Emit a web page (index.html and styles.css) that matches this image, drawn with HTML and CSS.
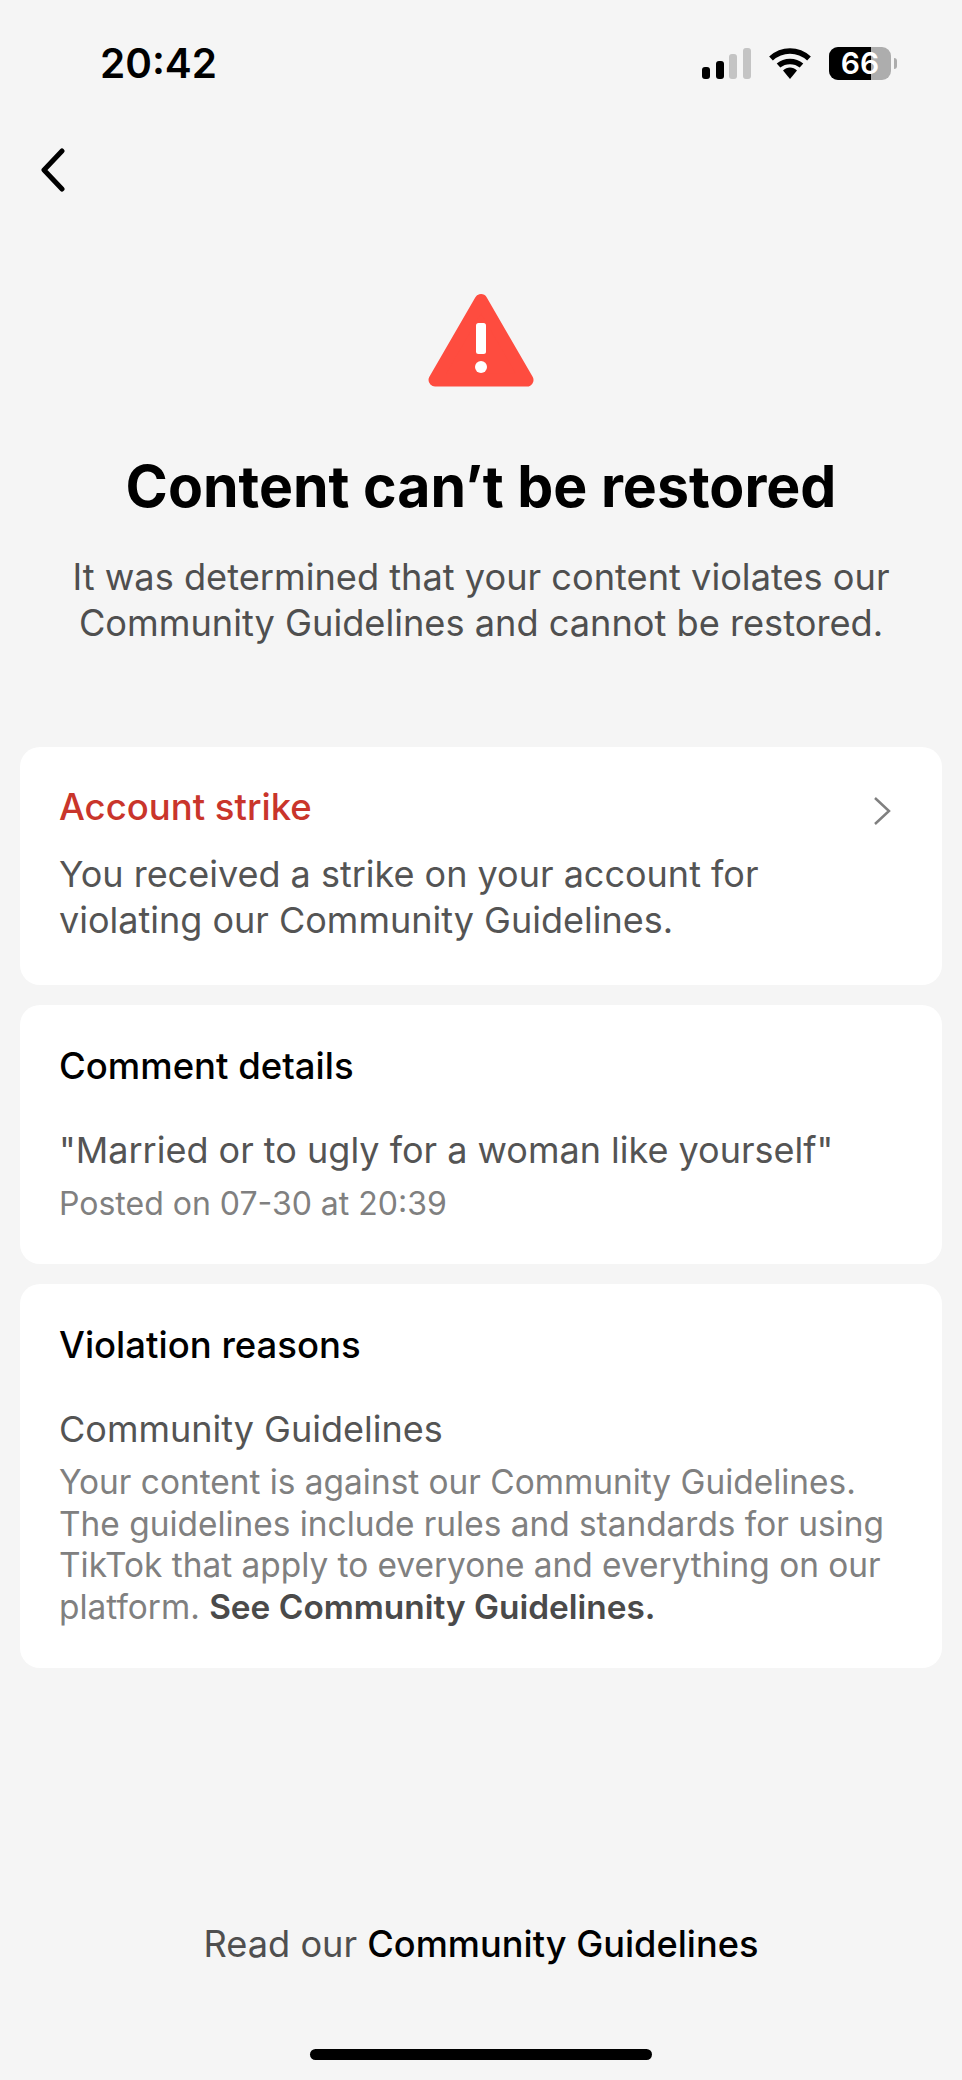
FILE: index.html
```html
<!DOCTYPE html>
<html lang="en">
<head>
    <meta charset="UTF-8" />
    <title>Content can't be restored</title>
    <link rel="stylesheet" href="styles.css">
</head>
<body>
<div class="screen">
    <div class="status-bar">
        <span class="time">20:42</span>
        <div class="status-icons">
            <svg class="signal" width="49" height="31" viewBox="0 0 49 31">
                <rect x="0" y="19" width="8" height="12" rx="3" fill="#000"/>
                <rect x="14" y="13" width="8" height="18" rx="3" fill="#000"/>
                <rect x="27" y="6" width="8" height="25" rx="3" fill="#c4c4c4"/>
                <rect x="41" y="0" width="8" height="31" rx="3" fill="#c4c4c4"/>
            </svg>
            <svg class="wifi" width="42" height="31" viewBox="0 0 42 31">
                <path d="M2 10.5C13 0.5 29 0.5 40 10.5" fill="none" stroke="#000" stroke-width="5.5"/>
                <path d="M9.500 17.500C16 12 26 12 32.500 17.500" fill="none" stroke="#000" stroke-width="5.500"/>
                <path d="M14 22.500C18 18.500 24 18.500 28 22.500L21 31Z" fill="#000"/>
            </svg>
            <div class="battery">
                <div class="battery-body">
                    <div class="battery-fill"></div>
                    <span class="battery-num">66</span>
                </div>
                <span class="battery-cap"></span>
            </div>
        </div>
    </div>

    <div class="nav">
        <svg width="26" height="44" viewBox="0 0 26 44">
            <path d="M23 3L5 22L23 41" fill="none" stroke="#000" stroke-width="5" stroke-linecap="round" stroke-linejoin="round"/>
        </svg>
    </div>

    <div class="hero">
        <svg class="warn" width="106" height="96" viewBox="0 0 106 96">
            <path d="M53 7.500L99 87H7Z" fill="#fe4c3f" stroke="#fe4c3f" stroke-width="13" stroke-linejoin="round"/>
            <rect x="48" y="30" width="10" height="31" rx="2.500" fill="#fff"/>
            <circle cx="53" cy="74" r="6" fill="#fff"/>
        </svg>
        <h1>Content can’t be restored</h1>
        <p class="lead">It was determined that your content violates our Community Guidelines and cannot be restored.</p>
    </div>

    <div class="cards">
        <div class="card card-strike">
            <div class="strike-head">
                <h2 class="strike-title">Account strike</h2>
                <svg class="chevron" width="20" height="32" viewBox="0 0 20 32">
                    <path d="M3 3L17 16L3 29" fill="none" stroke="#808080" stroke-width="2.500"/>
                </svg>
            </div>
            <p class="body-text">You received a strike on your account for violating our Community Guidelines.</p>
        </div>

        <div class="card">
            <h2>Comment details</h2>
            <p class="body-text quote">"Married or to ugly for a woman like yourself"</p>
            <p class="small-text">Posted on 07-30 at 20:39</p>
        </div>

        <div class="card">
            <h2>Violation reasons</h2>
            <p class="body-text quote">Community Guidelines</p>
            <p class="small-text reason">Your content is against our Community Guidelines. The guidelines include rules and standards for using TikTok that apply to everyone and everything on our platform. <b>See Community Guidelines.</b></p>
        </div>
    </div>

    <p class="read-more">Read our <b>Community Guidelines</b></p>
    <div class="home-bar"></div>
</div>
</body>
</html>
```

FILE: styles.css
```css
* {
    box-sizing: border-box;
    margin: 0;
    padding: 0;
}
body {
    font-family: Inter, "Liberation Sans", sans-serif;
    background: #f5f5f5;
}
.screen {
    width: 962px;
    height: 2080px;
    display: flex;
    flex-direction: column;
}
.status-bar {
    height: 148px;
    padding: 41px 65px 0 100px;
    display: flex;
    justify-content: space-between;
    align-items: flex-start;
}
.time {
    font-size: 40.5px;
    line-height: 46px;
    font-weight: 600;
    color: #000;
}
.status-icons {
    display: flex;
    align-items: center;
    gap: 18px;
    padding-top: 6px;
}
.battery {
    display: flex;
    align-items: center;
    gap: 3px;
}
.battery-body {
    position: relative;
    width: 62px;
    height: 33px;
    border-radius: 9px;
    background: #adadad;
}
.battery-fill {
    width: 42px;
    height: 100%;
    border-radius: 9px 0 0 9px;
    background: #000;
}
.battery-num {
    position: absolute;
    left: 0;
    right: 0;
    top: 0;
    text-align: center;
    font-size: 30px;
    line-height: 33px;
    font-weight: 600;
    color: #fff;
}
.battery-cap {
    width: 3px;
    height: 11px;
    border-radius: 0 3px 3px 0;
    background: #adadad;
}
.nav {
    height: 44px;
    padding-left: 39px;
    display: flex;
}
.hero {
    padding: 101px 40px 0;
    text-align: center;
}
.warn {
    display: block;
    margin: 0 auto;
}
h1 {
    margin-top: 62px;
    font-size: 57.2px;
    line-height: 72px;
    font-weight: 700;
    color: #000;
}
.lead {
    margin-top: 31px;
    font-size: 36.2px;
    line-height: 46px;
    color: #4f4f4f;
}
.cards {
    margin-top: 101px;
    padding: 0 20px;
    display: flex;
    flex-direction: column;
    gap: 20px;
}
.card {
    background: #fff;
    border-radius: 20px;
    padding: 41px 40px 39px 39px;
}
.card-strike {
    padding: 40px 40px 42px 39px;
}
.card h2 {
    font-size: 36.5px;
    line-height: 40px;
    font-weight: 500;
    color: #000;
}
.strike-head {
    display: flex;
    justify-content: space-between;
    align-items: center;
    padding-right: 10px;
}
.chevron {
    margin-top: 8px;
}
.card .strike-title {
    color: #c9352b;
}
.body-text {
    margin-top: 24px;
    font-size: 36px;
    line-height: 46px;
    color: #545454;
}
.quote {
    margin-top: 41px;
}
.small-text {
    margin-top: 10px;
    font-size: 32px;
    line-height: 42px;
    color: #808080;
}
.reason {
    font-size: 33.4px;
    line-height: 41.7px;
}
.small-text b {
    color: #4a4a4a;
    font-weight: 600;
}
.read-more {
    margin-top: auto;
    text-align: center;
    font-size: 36.2px;
    line-height: 44px;
    color: #4f4f4f;
}
.read-more b {
    color: #000;
    font-weight: 500;
}
.home-bar {
    width: 342px;
    height: 11px;
    margin: 83px auto 20px;
    border-radius: 6px;
    background: #000;
}
```
